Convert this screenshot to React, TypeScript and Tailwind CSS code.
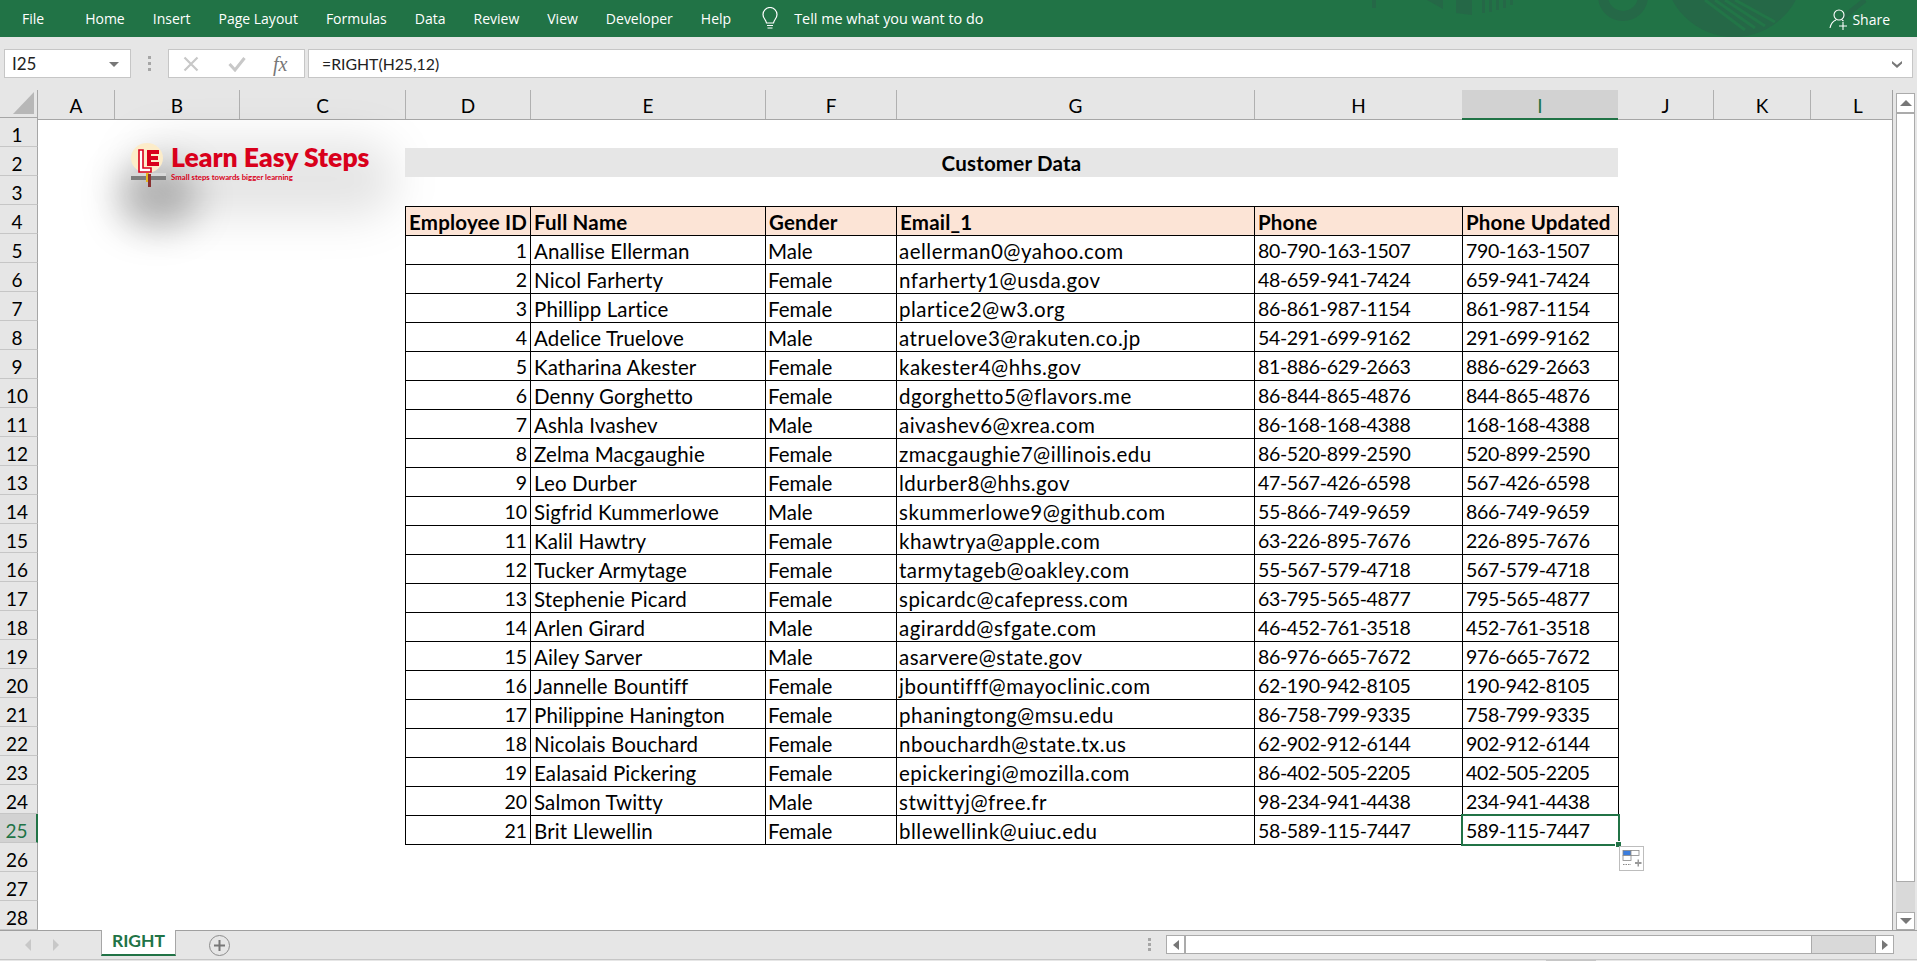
import React from "react";

const rows: string[][] = [
  ["1", "Anallise Ellerman", "Male", "aellerman0@yahoo.com", "80-790-163-1507", "790-163-1507"],
  ["2", "Nicol Farherty", "Female", "nfarherty1@usda.gov", "48-659-941-7424", "659-941-7424"],
  ["3", "Phillipp Lartice", "Female", "plartice2@w3.org", "86-861-987-1154", "861-987-1154"],
  ["4", "Adelice Truelove", "Male", "atruelove3@rakuten.co.jp", "54-291-699-9162", "291-699-9162"],
  ["5", "Katharina Akester", "Female", "kakester4@hhs.gov", "81-886-629-2663", "886-629-2663"],
  ["6", "Denny Gorghetto", "Female", "dgorghetto5@flavors.me", "86-844-865-4876", "844-865-4876"],
  ["7", "Ashla Ivashev", "Male", "aivashev6@xrea.com", "86-168-168-4388", "168-168-4388"],
  ["8", "Zelma Macgaughie", "Female", "zmacgaughie7@illinois.edu", "86-520-899-2590", "520-899-2590"],
  ["9", "Leo Durber", "Female", "ldurber8@hhs.gov", "47-567-426-6598", "567-426-6598"],
  ["10", "Sigfrid Kummerlowe", "Male", "skummerlowe9@github.com", "55-866-749-9659", "866-749-9659"],
  ["11", "Kalil Hawtry", "Female", "khawtrya@apple.com", "63-226-895-7676", "226-895-7676"],
  ["12", "Tucker Armytage", "Female", "tarmytageb@oakley.com", "55-567-579-4718", "567-579-4718"],
  ["13", "Stephenie Picard", "Female", "spicardc@cafepress.com", "63-795-565-4877", "795-565-4877"],
  ["14", "Arlen Girard", "Male", "agirardd@sfgate.com", "46-452-761-3518", "452-761-3518"],
  ["15", "Ailey Sarver", "Male", "asarvere@state.gov", "86-976-665-7672", "976-665-7672"],
  ["16", "Jannelle Bountiff", "Female", "jbountifff@mayoclinic.com", "62-190-942-8105", "190-942-8105"],
  ["17", "Philippine Hanington", "Female", "phaningtong@msu.edu", "86-758-799-9335", "758-799-9335"],
  ["18", "Nicolais Bouchard", "Female", "nbouchardh@state.tx.us", "62-902-912-6144", "902-912-6144"],
  ["19", "Ealasaid Pickering", "Female", "epickeringi@mozilla.com", "86-402-505-2205", "402-505-2205"],
  ["20", "Salmon Twitty", "Male", "stwittyj@free.fr", "98-234-941-4438", "234-941-4438"],
  ["21", "Brit Llewellin", "Female", "bllewellink@uiuc.edu", "58-589-115-7447", "589-115-7447"],
];

const headers = ["Employee ID", "Full Name", "Gender", "Email_1", "Phone", "Phone Updated"];

const columns: { label: string; cls: string; selected?: boolean }[] = [
  { label: "A", cls: "w-[77px]" },
  { label: "B", cls: "w-[125px]" },
  { label: "C", cls: "w-[166px]" },
  { label: "D", cls: "w-[125px]" },
  { label: "E", cls: "w-[235px]" },
  { label: "F", cls: "w-[131px]" },
  { label: "G", cls: "w-[358px]" },
  { label: "H", cls: "w-[208px]" },
  { label: "I", cls: "w-[156px]", selected: true },
  { label: "J", cls: "w-[96px]" },
  { label: "K", cls: "w-[97px]" },
  { label: "L", cls: "w-[80px] pl-[14px]" },
];

const tabs = ["Home", "Insert", "Page Layout", "Formulas", "Data", "Review", "View", "Developer", "Help"];

const cellCls = [
  "justify-end pr-[3px] text-[19.5px]",
  "pl-[3px] text-[20.5px] tracking-[0.14px]",
  "pl-[2px] text-[20.5px]",
  "pl-[2px] text-[20.5px] tracking-[0.5px]",
  "pl-[3px] text-[19.5px] tracking-[-0.33px]",
  "pl-[3px] text-[19.5px] tracking-[-0.33px]",
];

function Decor() {
  return (
    <svg className="absolute left-[1360px] top-0 pointer-events-none" width="557" height="37" viewBox="0 0 557 37">
      <g fill="#256847">
        <rect x="12" y="0" width="4" height="8" />
        <polygon points="67,0 83,0 83,9" />
        <polygon points="96,0 112,0 112,15 96,13" />
        <rect x="122" y="0" width="3" height="13" />
        <rect x="129" y="0" width="3" height="12" />
        <rect x="136" y="0" width="3" height="10" />
        <rect x="143" y="0" width="3" height="8" />
        <rect x="150" y="0" width="3" height="5" />
      </g>
      <circle cx="263" cy="-4" r="20" fill="none" stroke="#256847" strokeWidth="10" />
      <circle cx="374" cy="-33" r="70" fill="#256847" />
      <g stroke="#227547" strokeWidth="3">
        <line x1="345" y1="0" x2="385" y2="30" />
        <line x1="355" y1="0" x2="395" y2="28" />
        <line x1="365" y1="0" x2="405" y2="26" />
        <line x1="375" y1="0" x2="415" y2="22" />
      </g>
      <path d="M480 20 L505 0" stroke="#256847" strokeWidth="5" fill="none" />
    </svg>
  );
}

function Ribbon() {
  return (
    <div className="relative h-[37px] shrink-0 bg-[#217346] text-white text-[14px] font-['Open_Sans',sans-serif] flex items-center overflow-hidden">
      <Decor />
      <span className="relative ml-[22px] mr-[41px]">File</span>
      <div className="relative flex gap-[28px]">
        {tabs.map((t) => (
          <span key={t}>{t}</span>
        ))}
      </div>
      <svg className="relative ml-[30px] mr-[15px]" width="18" height="24" viewBox="0 0 18 24" fill="none" stroke="#fff" strokeWidth="1.2">
        <path d="M5.5 16 C5 12.5 2 11.5 2 7.5 A7 7 0 0 1 16 7.5 C16 11.5 13 12.5 12.5 16 Z" />
        <path d="M6 18.5 H12 M6.5 21 H11.5" />
      </svg>
      <span className="relative text-[14.4px]">Tell me what you want to do</span>
      <div className="relative ml-auto mr-[27px] pt-px flex items-center gap-[3px]">
        <svg width="20" height="22" viewBox="0 0 20 22" fill="none" stroke="#fff" strokeWidth="1.1">
          <circle cx="10" cy="7" r="5" />
          <path d="M1 20 C2 15 4 13 7 12 M13 12 L14.5 13" />
          <path d="M14 14 V22 M10 18 H18" />
        </svg>
        <span>Share</span>
      </div>
    </div>
  );
}

function FormulaBar() {
  return (
    <div className="h-[53px] shrink-0 pt-[12px] pb-[12px] flex items-stretch font-['Lato',sans-serif] text-[17px] text-[#222]">
      <div className="ml-[4px] w-[127px] bg-white border border-[#c6c6c6] flex items-center justify-between pl-[7px] pr-[11px] pt-px">
        <span>I25</span>
        <span className="w-0 h-0 border-l-[5px] border-r-[5px] border-t-[5px] border-l-transparent border-r-transparent border-t-[#777]" />
      </div>
      <div className="w-[37px] flex flex-col items-center justify-center gap-[3px]">
        <span className="w-[3px] h-[3px] bg-[#a6a6a6]" />
        <span className="w-[3px] h-[3px] bg-[#a6a6a6]" />
        <span className="w-[3px] h-[3px] bg-[#a6a6a6]" />
      </div>
      <div className="w-[137px] bg-white border border-[#c6c6c6] flex items-center">
        <svg className="ml-[14px]" width="16" height="16" viewBox="0 0 16 16" stroke="#c8c8c8" strokeWidth="2.2" fill="none">
          <path d="M1.5 1.5 L14.5 14.5 M14.5 1.5 L1.5 14.5" />
        </svg>
        <svg className="ml-[29px]" width="18" height="16" viewBox="0 0 18 16" stroke="#c8c8c8" strokeWidth="3" fill="none">
          <path d="M1.5 8 L7 14 L16.5 2" />
        </svg>
        <span className="ml-[27px] font-['Liberation_Serif',serif] italic text-[20px] text-[#777]">fx</span>
      </div>
      <div className="ml-[3px] mr-[4px] flex-1 bg-white border border-[#c6c6c6] flex items-center pl-[13px] pr-[9px] justify-between pt-px">
        <span className="text-[15.8px]">=RIGHT(H25,12)</span>
        <svg width="12" height="9" viewBox="0 0 12 9" fill="#777">
          <path d="M1 1 L6 5 L11 1 V3.5 L6 8 L1 3.5 Z" />
        </svg>
      </div>
    </div>
  );
}

function Logo() {
  return (
    <div className="absolute left-[93px] top-[20px] w-[240px] h-[50px]">
      <div className="absolute left-[-14px] top-[26px] w-[80px] h-[62px] rounded-full bg-black/25 blur-[18px]" />
      <div className="absolute left-[0px] top-[0px] w-[265px] h-[78px] rounded-[36px] bg-black/10 blur-[22px]" />
      <svg className="absolute left-0 top-[3px]" width="37" height="46" viewBox="0 0 37 46">
        <ellipse cx="16" cy="15" rx="16" ry="15" fill="#fcecc9" />
        <path d="M8 7 H12 V25 H20 V29 H8 Z" fill="#fff" stroke="#d9001b" strokeWidth="1.6" />
        <path d="M16 7 H28 V11 H20 V13 H27 V17 H20 V19 H28 V23 H16 Z" fill="#d9001b" />
        <rect x="0" y="30" width="35" height="3" fill="#d8d8d8" />
        <rect x="0" y="33" width="35" height="4" fill="#7d7d7d" />
        <rect x="15" y="30" width="3" height="9" fill="#e6b820" />
        <rect x="17" y="31" width="3" height="13" fill="#8a3030" />
      </svg>
      <div className="absolute left-[40px] top-0 font-['Lato',sans-serif] font-extrabold text-[#d9001b] text-[26.5px] leading-[34px] whitespace-nowrap">
        Learn Easy Steps
      </div>
      <div className="absolute left-[40px] top-[32px] font-['Lato',sans-serif] font-bold text-[#d9001b] text-[7.8px] leading-[11px] whitespace-nowrap">
        Small steps towards bigger learning
      </div>
    </div>
  );
}

function DataTable() {
  const cols = "grid grid-cols-[125px_235px_131px_358px_208px_156px]";
  const base = "h-[29px] border-t border-l border-black flex items-center pt-[2px] whitespace-nowrap";
  return (
    <div className={`${cols} w-fit border-r border-b border-black`}>
      {headers.map((h) => (
        <div key={h} className={`${base} bg-[#fce4d6] font-bold text-[20.5px] tracking-[0.2px] pl-[3px]`}>
          {h}
        </div>
      ))}
      {rows.map((r, ri) =>
        r.map((c, ci) => (
          <div key={`${ri}-${ci}`} className={`${base} ${cellCls[ci]} relative`}>
            {c}
            {ri === 20 && ci === 5 && (
              <>
                <span className="absolute left-[-2px] top-[-2px] right-[-2px] bottom-[-2px] border-[2px] border-[#217346]" />
                <span className="absolute right-[-3px] bottom-[-3px] w-[5px] h-[5px] bg-[#217346] outline outline-1 outline-white" />
              </>
            )}
          </div>
        ))
      )}
    </div>
  );
}

function Sheet() {
  return (
    <div className="w-[1893px] bg-white flex border-r border-[#a0a0a0]">
      <div className="w-[38px] shrink-0 bg-[#e6e6e6] flex flex-col">
        <div className="h-[30px] border-b border-[#a6a6a6] border-r relative">
          <svg className="absolute right-[3px] bottom-[3px]" width="21" height="22" viewBox="0 0 21 22">
            <polygon points="21,0 21,22 0,22" fill="#b7b7b7" />
          </svg>
        </div>
        {Array.from({ length: 28 }, (_, i) => i + 1).map((n) => (
          <div
            key={n}
            className={`h-[29px] shrink-0 flex items-center justify-center pr-[3px] pt-[6px] leading-[20px] text-[19px] border-b border-[#c6c6c6] ${
              n === 25
                ? "bg-[#d2d2d2] text-[#217346] border-r-2 border-r-[#217346]"
                : "border-r border-r-[#a6a6a6]"
            }`}
          >
            {n}
          </div>
        ))}
      </div>
      <div className="flex-1 flex flex-col min-w-0">
        <div className="h-[30px] shrink-0 flex bg-[#e6e6e6] border-b border-[#a6a6a6]">
          {columns.map((c) =>
            c.selected ? (
              <div
                key={c.label}
                className={`${c.cls} -mb-px -ml-px bg-[#d2d2d2] text-[#217346] flex items-center justify-center pt-[4px] text-[19px] border-b-2 border-[#217346]`}
              >
                {c.label}
              </div>
            ) : (
              <div
                key={c.label}
                className={`${c.cls} flex items-center justify-center pt-[4px] text-[19px] text-black ${
                  c.label === "L" ? "" : "border-r border-[#b0b0b0]"
                }`}
              >
                {c.label}
              </div>
            )
          )}
        </div>
        <div className="relative flex-1 pl-[367px] pt-[28px]">
          <Logo />
          <div className="relative w-[1213px] h-[29px] bg-[#e6e6e6] flex items-center justify-center font-bold text-[20.5px] tracking-[0.2px] pt-[2px]">
            Customer Data
          </div>
          <div className="relative mt-[29px]">
            <DataTable />
          </div>
          <div className="absolute left-[1581px] top-[726px] w-[25px] h-[25px] bg-white border border-[#bdbdbd]">
            <svg width="23" height="23" viewBox="0 0 23 23">
              <rect x="3" y="3.5" width="8" height="5" fill="#3b7ddd" stroke="#888" strokeWidth="0.8" />
              <rect x="11" y="3.5" width="8" height="5" fill="#fff" stroke="#888" strokeWidth="0.8" />
              <rect x="3" y="8.5" width="8" height="5" fill="#fff" stroke="#888" strokeWidth="0.8" />
              <path d="M3 17.5 H11" stroke="#888" strokeWidth="1" strokeDasharray="1.5 1" fill="none" />
              <path d="M15 15 H17.5 V12.5 H19 V15 H21.5 V17 H19 V19.5 H17.5 V17 H15 Z" fill="#999" />
            </svg>
          </div>
        </div>
      </div>
    </div>
  );
}

function VerticalScroll() {
  return (
    <div className="w-[24px] shrink-0 pl-[3px] pr-[2px] pt-[3px] flex flex-col">
      <div className="h-[20px] shrink-0 bg-white border border-[#ababab] flex items-center justify-center">
        <span className="w-0 h-0 border-l-[6px] border-r-[6px] border-b-[6px] border-l-transparent border-r-transparent border-b-[#777]" />
      </div>
      <div className="flex-1 bg-[#d9d9d9] flex flex-col">
        <div className="h-[769px] bg-white border border-[#ababab]" />
      </div>
      <div className="h-[18px] shrink-0 bg-white border border-[#ababab] flex items-center justify-center">
        <span className="w-0 h-0 border-l-[6px] border-r-[6px] border-t-[6px] border-l-transparent border-r-transparent border-t-[#777]" />
      </div>
    </div>
  );
}

function BottomBar() {
  return (
    <div className="h-[29px] shrink-0 border-t border-[#a0a0a0] flex">
      <div className="w-[101px] flex items-center">
        <span className="ml-[25px] w-0 h-0 border-t-[6px] border-b-[6px] border-r-[6px] border-t-transparent border-b-transparent border-r-[#c8c8c8]" />
        <span className="ml-[22px] w-0 h-0 border-t-[6px] border-b-[6px] border-l-[6px] border-t-transparent border-b-transparent border-l-[#c8c8c8]" />
      </div>
      <div className="w-[75px] h-[26px] bg-white border-l border-r border-[#a6a6a6] border-b-2 border-b-[#217346] flex items-center justify-center font-bold text-[#217346] text-[17.5px] pb-[2px] -mt-px">
        RIGHT
      </div>
      <div className="w-[21px] h-[21px] ml-[33px] mt-[4px] rounded-full border border-[#8c8c8c] flex items-center justify-center">
        <svg width="13" height="13" viewBox="0 0 13 13">
          <path d="M6.5 1 V12 M1 6.5 H12" stroke="#777" strokeWidth="2" />
        </svg>
      </div>
      <div className="ml-[918px] w-[4px] flex flex-col gap-[2px] mt-[7px]">
        <span className="w-[3px] h-[3px] bg-[#a6a6a6]" />
        <span className="w-[3px] h-[3px] bg-[#a6a6a6]" />
        <span className="w-[3px] h-[3px] bg-[#a6a6a6]" />
      </div>
      <div className="ml-[14px] w-[728px] h-[19px] mt-[4px] flex border border-[#ababab] bg-[#d9d9d9]">
        <div className="w-[19px] bg-white border-r-2 border-[#ababab] flex items-center justify-center">
          <span className="w-0 h-0 border-t-[5px] border-b-[5px] border-r-[6px] border-t-transparent border-b-transparent border-r-[#777]" />
        </div>
        <div className="w-[626px] bg-white border-r border-[#ababab]" />
        <div className="flex-1" />
        <div className="w-[18px] bg-white border-l border-[#ababab] flex items-center justify-center">
          <span className="w-0 h-0 border-t-[5px] border-b-[5px] border-l-[6px] border-t-transparent border-b-transparent border-l-[#777]" />
        </div>
      </div>
    </div>
  );
}

export default function App() {
  return (
    <div className="w-[1917px] h-[961px] overflow-hidden bg-[#e6e6e6] flex flex-col font-['Lato',sans-serif] text-[19.5px] text-black">
      <Ribbon />
      <FormulaBar />
      <div className="h-[840px] shrink-0 flex">
        <Sheet />
        <VerticalScroll />
      </div>
      <BottomBar />
      <div className="relative h-[2px] shrink-0 border-t border-[#c6c6c6]">
        <span className="absolute left-[1546px] top-0 w-[50px] h-[1px] bg-[#c6c6c6]" />
      </div>
    </div>
  );
}
